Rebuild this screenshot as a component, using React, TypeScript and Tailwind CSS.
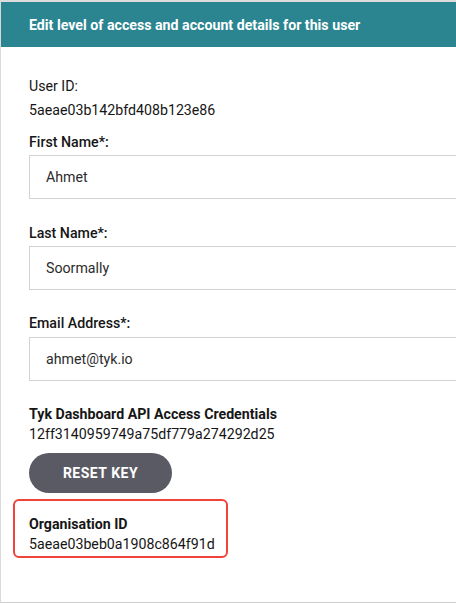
import React from "react";

export default function App() {
  const font = { fontFamily: "Roboto, 'Liberation Sans', sans-serif" };
  return (
    <div
      className="w-[456px] h-[603px] overflow-hidden bg-white border-t-2 border-t-[#dcdcdc] border-l border-l-[#d9d9d9] border-b border-b-[#cfcfcf] text-[14.2px] leading-[20px] text-[#161616]"
      style={font}
    >
      <div className="h-[45px] bg-[#2a8590] flex items-center pl-[28px] text-white font-bold text-[14.2px]">
        Edit level of access and account details for this user
      </div>
      <div className="pl-[28px] flex flex-col">
        <div className="mt-[29px]">User ID:</div>
        <div className="mt-[4px]">5aeae03b142bfd408b123e86</div>

        <div className="mt-[12px] font-medium">First Name*:</div>
        <div className="mt-[3px] w-[480px] h-[44px] border border-[#d2d2d2] flex items-center pl-[16px] text-[#2b2b2b]">
          Ahmet
        </div>

        <div className="mt-[24px] font-medium">Last Name*:</div>
        <div className="mt-[3px] w-[480px] h-[44px] border border-[#d2d2d2] flex items-center pl-[16px] text-[#2b2b2b]">
          Soormally
        </div>

        <div className="mt-[23px] font-medium">Email Address*:</div>
        <div className="mt-[4px] w-[480px] h-[44px] border border-[#d2d2d2] flex items-center pl-[16px] text-[#2b2b2b]">
          ahmet@tyk.io
        </div>

        <div className="mt-[23px] font-bold">Tyk Dashboard API Access Credentials</div>
        <div>12ff3140959749a75df779a274292d25</div>

        <div className="mt-[9px] w-[143px] h-[40px] rounded-full bg-[#5a5a65] text-white font-bold text-[14px] tracking-[0.5px] flex items-center justify-center">
          RESET KEY
        </div>

        <div className="mt-[6px] -ml-[16px] w-[215px] h-[59px] border-2 border-[#f0433a] rounded-[6px] pl-[14px] pt-[13px]">
          <div className="font-bold">Organisation ID</div>
          <div>5aeae03beb0a1908c864f91d</div>
        </div>
      </div>
    </div>
  );
}
